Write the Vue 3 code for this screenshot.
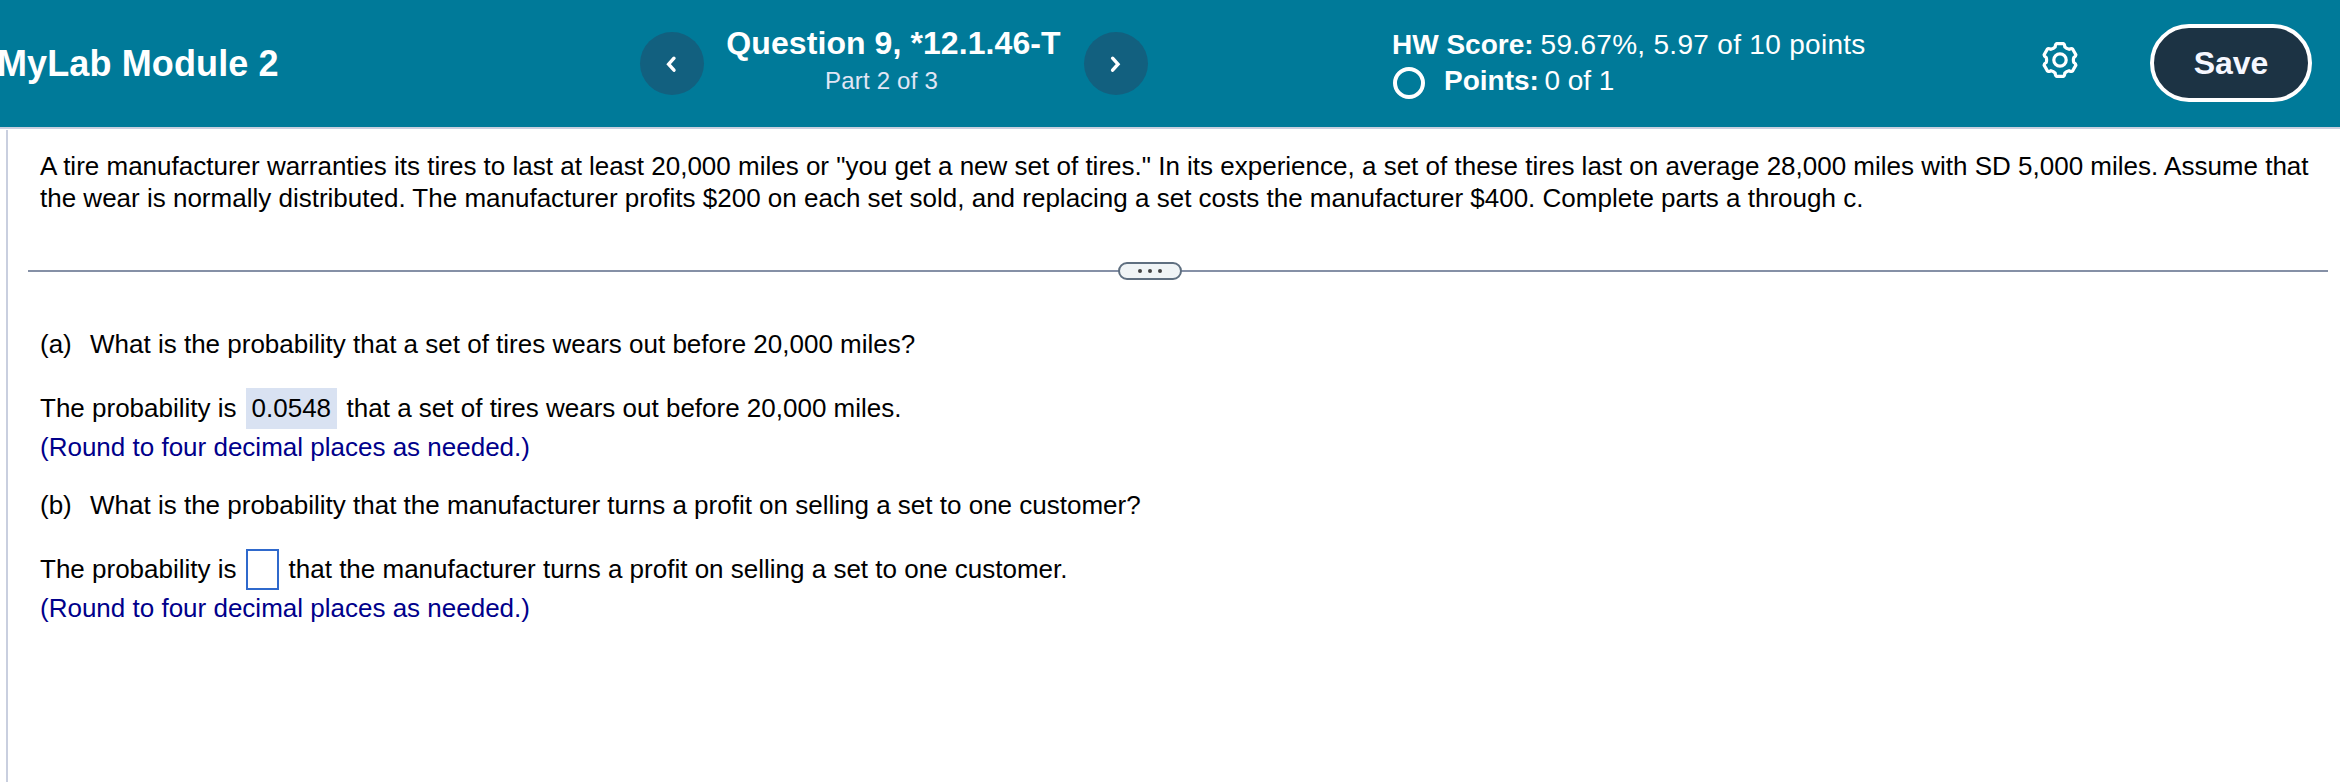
<script setup>
const hint = '(Round to four decimal places as needed.)'

// Six-toothed gear outline centred on (18, 18)
const point = (deg, r) => {
  const a = (deg * Math.PI) / 180
  return `${(18 + r * Math.cos(a)).toFixed(2)} ${(18 + r * Math.sin(a)).toFixed(2)}`
}
const gear =
  'M' +
  [0, 1, 2, 3, 4, 5]
    .map((i) => {
      const c = -90 + i * 60
      return [
        point(c - 20, 14),
        `Q${point(c - 16, 16.8)} ${point(c - 11, 16.7)}`,
        `Q${point(c, 16.3)} ${point(c + 11, 16.7)}`,
        `Q${point(c + 16, 16.8)} ${point(c + 20, 14)}`,
        `Q${point(c + 30, 13)} ${point(c + 40, 14)}`,
      ].join(' ')
    })
    .join(' L') +
  'Z'
</script>

<template>
  <div class="page">
    <header class="bar">
      <h1 class="title">MyLab Module 2</h1>
      <nav class="nav">
        <button class="round" aria-label="Previous">
          <svg width="64" height="64" viewBox="0 0 64 64"><path d="M34 26.2 28.6 32.2 34 38.2" /></svg>
        </button>
        <div class="question">
          <div class="qname">Question 9, *12.1.46-T</div>
          <div class="part">Part 2 of 3</div>
        </div>
        <button class="round" aria-label="Next">
          <svg width="64" height="64" viewBox="0 0 64 64"><path d="M28.6 26.2 34 32.2 28.6 38.2" /></svg>
        </button>
      </nav>
      <div class="score">
        <div class="row"><b>HW Score:</b><span class="num">59.67%, 5.97 of 10 points</span></div>
        <div class="row second"><i class="ring"></i><b>Points:</b><span>0 of 1</span></div>
      </div>
      <svg class="gear" width="36" height="36" viewBox="0 0 36 36">
        <path :d="gear" />
        <circle cx="18" cy="18" r="6.2" />
      </svg>
      <button class="save">Save</button>
    </header>

    <main class="content">
      <p class="intro">
        A tire manufacturer warranties its tires to last at least 20,000 miles or "you get a new set of tires." In its experience, a set of these tires last on average 28,000 miles with SD 5,000 miles. Assume that<br />
        the wear is normally distributed. The manufacturer profits $200 on each set sold, and replacing a set costs the manufacturer $400. Complete parts a through c.
      </p>
      <div class="divider">
        <span class="pill"><i></i><i></i><i></i></span>
      </div>
      <section class="part-block">
        <p class="ask"><span class="letter">(a)</span>What is the probability that a set of tires wears out before 20,000 miles?</p>
        <p class="answer">
          <span>The probability is</span><span class="given">0.0548</span><span>that a set of tires wears out before 20,000 miles.</span>
        </p>
        <p class="hint">{{ hint }}</p>
      </section>
      <section class="part-block">
        <p class="ask"><span class="letter">(b)</span>What is the probability that the manufacturer turns a profit on selling a set to one customer?</p>
        <p class="answer">
          <span>The probability is</span><span class="blank"></span><span>that the manufacturer turns a profit on selling a set to one customer.</span>
        </p>
        <p class="hint">{{ hint }}</p>
      </section>
    </main>
  </div>
</template>

<style>
body {
  margin: 0;
  background: #fff;
}
</style>

<style scoped>
.page {
  width: 2340px;
  height: 782px;
  overflow: hidden;
  display: flex;
  flex-direction: column;
  font-family: "Liberation Sans", Arial, sans-serif;
  font-size: 26px;
  line-height: 32px;
  color: #000;
  white-space: nowrap;
}
p, h1 { margin: 0; }
button {
  padding: 0;
  border: 0;
  font-family: inherit;
}
.bar {
  box-sizing: border-box;
  height: 129px;
  flex: none;
  display: flex;
  align-items: flex-start;
  background: #007a99;
  border-bottom: 2px solid #c9cfdf;
  color: #fff;
}
.title {
  width: 643px;
  margin-left: -3px;
  padding-top: 43px;
  font-size: 36px;
  line-height: 41px;
  letter-spacing: 0.12px;
}
.nav {
  width: 508px;
  display: flex;
  justify-content: space-between;
}
.round {
  width: 64px;
  height: 63px;
  margin-top: 31.5px;
  border-radius: 50%;
  background: #12607f;
}
.round svg {
  display: block;
  fill: none;
  stroke: #fff;
  stroke-width: 3.4;
  stroke-linecap: round;
}
.question {
  padding-top: 25px;
  margin-left: -1px;
}
.qname {
  font-size: 32px;
  font-weight: bold;
  line-height: 37px;
  letter-spacing: 0.08px;
}
.part {
  margin-top: 5px;
  padding-right: 24px;
  text-align: center;
  font-size: 24px;
  line-height: 28px;
  letter-spacing: 0.2px;
  color: #e1e6f5;
}
.score {
  width: 650px;
  margin-left: 244px;
  padding-top: 27px;
  font-size: 28px;
  line-height: 36px;
}
.row {
  display: flex;
  gap: 7px;
}
.num { letter-spacing: 0.3px; }
.second span { margin-left: -1.5px; }
.ring {
  box-sizing: border-box;
  width: 32px;
  height: 32px;
  margin: 4px 12px 0 1px;
  border: 4px solid #fff;
  border-radius: 50%;
}
.gear {
  margin-top: 42px;
  fill: none;
  stroke: #fff;
  stroke-width: 3.2;
  stroke-linejoin: round;
}
.save {
  box-sizing: border-box;
  width: 162px;
  height: 78px;
  margin: 24px 0 0 72px;
  border: 4px solid #fff;
  border-radius: 39px;
  background: #1c3344;
  color: #f5f7ff;
  font-size: 32px;
  font-weight: bold;
}
.content {
  flex: 1;
  margin: 1px 0 0 6px;
  padding: 20px 12px 0 20px;
  border-left: 2px solid #c9cfdf;
}
.intro { padding-left: 12px; }
.divider {
  display: flex;
  align-items: center;
  justify-content: center;
  height: 18px;
  margin: 48px 0;
  background: linear-gradient(#8590a6, #8590a6) center / 100% 2px no-repeat;
}
.pill {
  box-sizing: border-box;
  width: 64px;
  height: 18px;
  margin-right: 56px;
  border: 2px solid #5f6f80;
  border-radius: 9px;
  background: #f0f4f6;
  display: flex;
  align-items: center;
  justify-content: center;
  gap: 6px;
}
.pill i {
  width: 4px;
  height: 4px;
  border-radius: 50%;
  background: #444;
}
.part-block {
  padding-left: 12px;
  margin-bottom: 26px;
}
.letter {
  display: inline-block;
  width: 50px;
}
.answer {
  display: flex;
  align-items: flex-start;
  height: 41px;
  margin: 28px 0 2px;
  line-height: 40px;
}
.given, .blank {
  box-sizing: border-box;
  height: 41px;
  margin: 0 9.5px 0 9.5px;
}
.given {
  padding: 0 5.5px;
  width: 91px;
  background: #d9e2f2;
}
.blank {
  width: 33px;
  border: 2px solid #2f69cc;
}
.hint { color: #00008b; }
</style>
